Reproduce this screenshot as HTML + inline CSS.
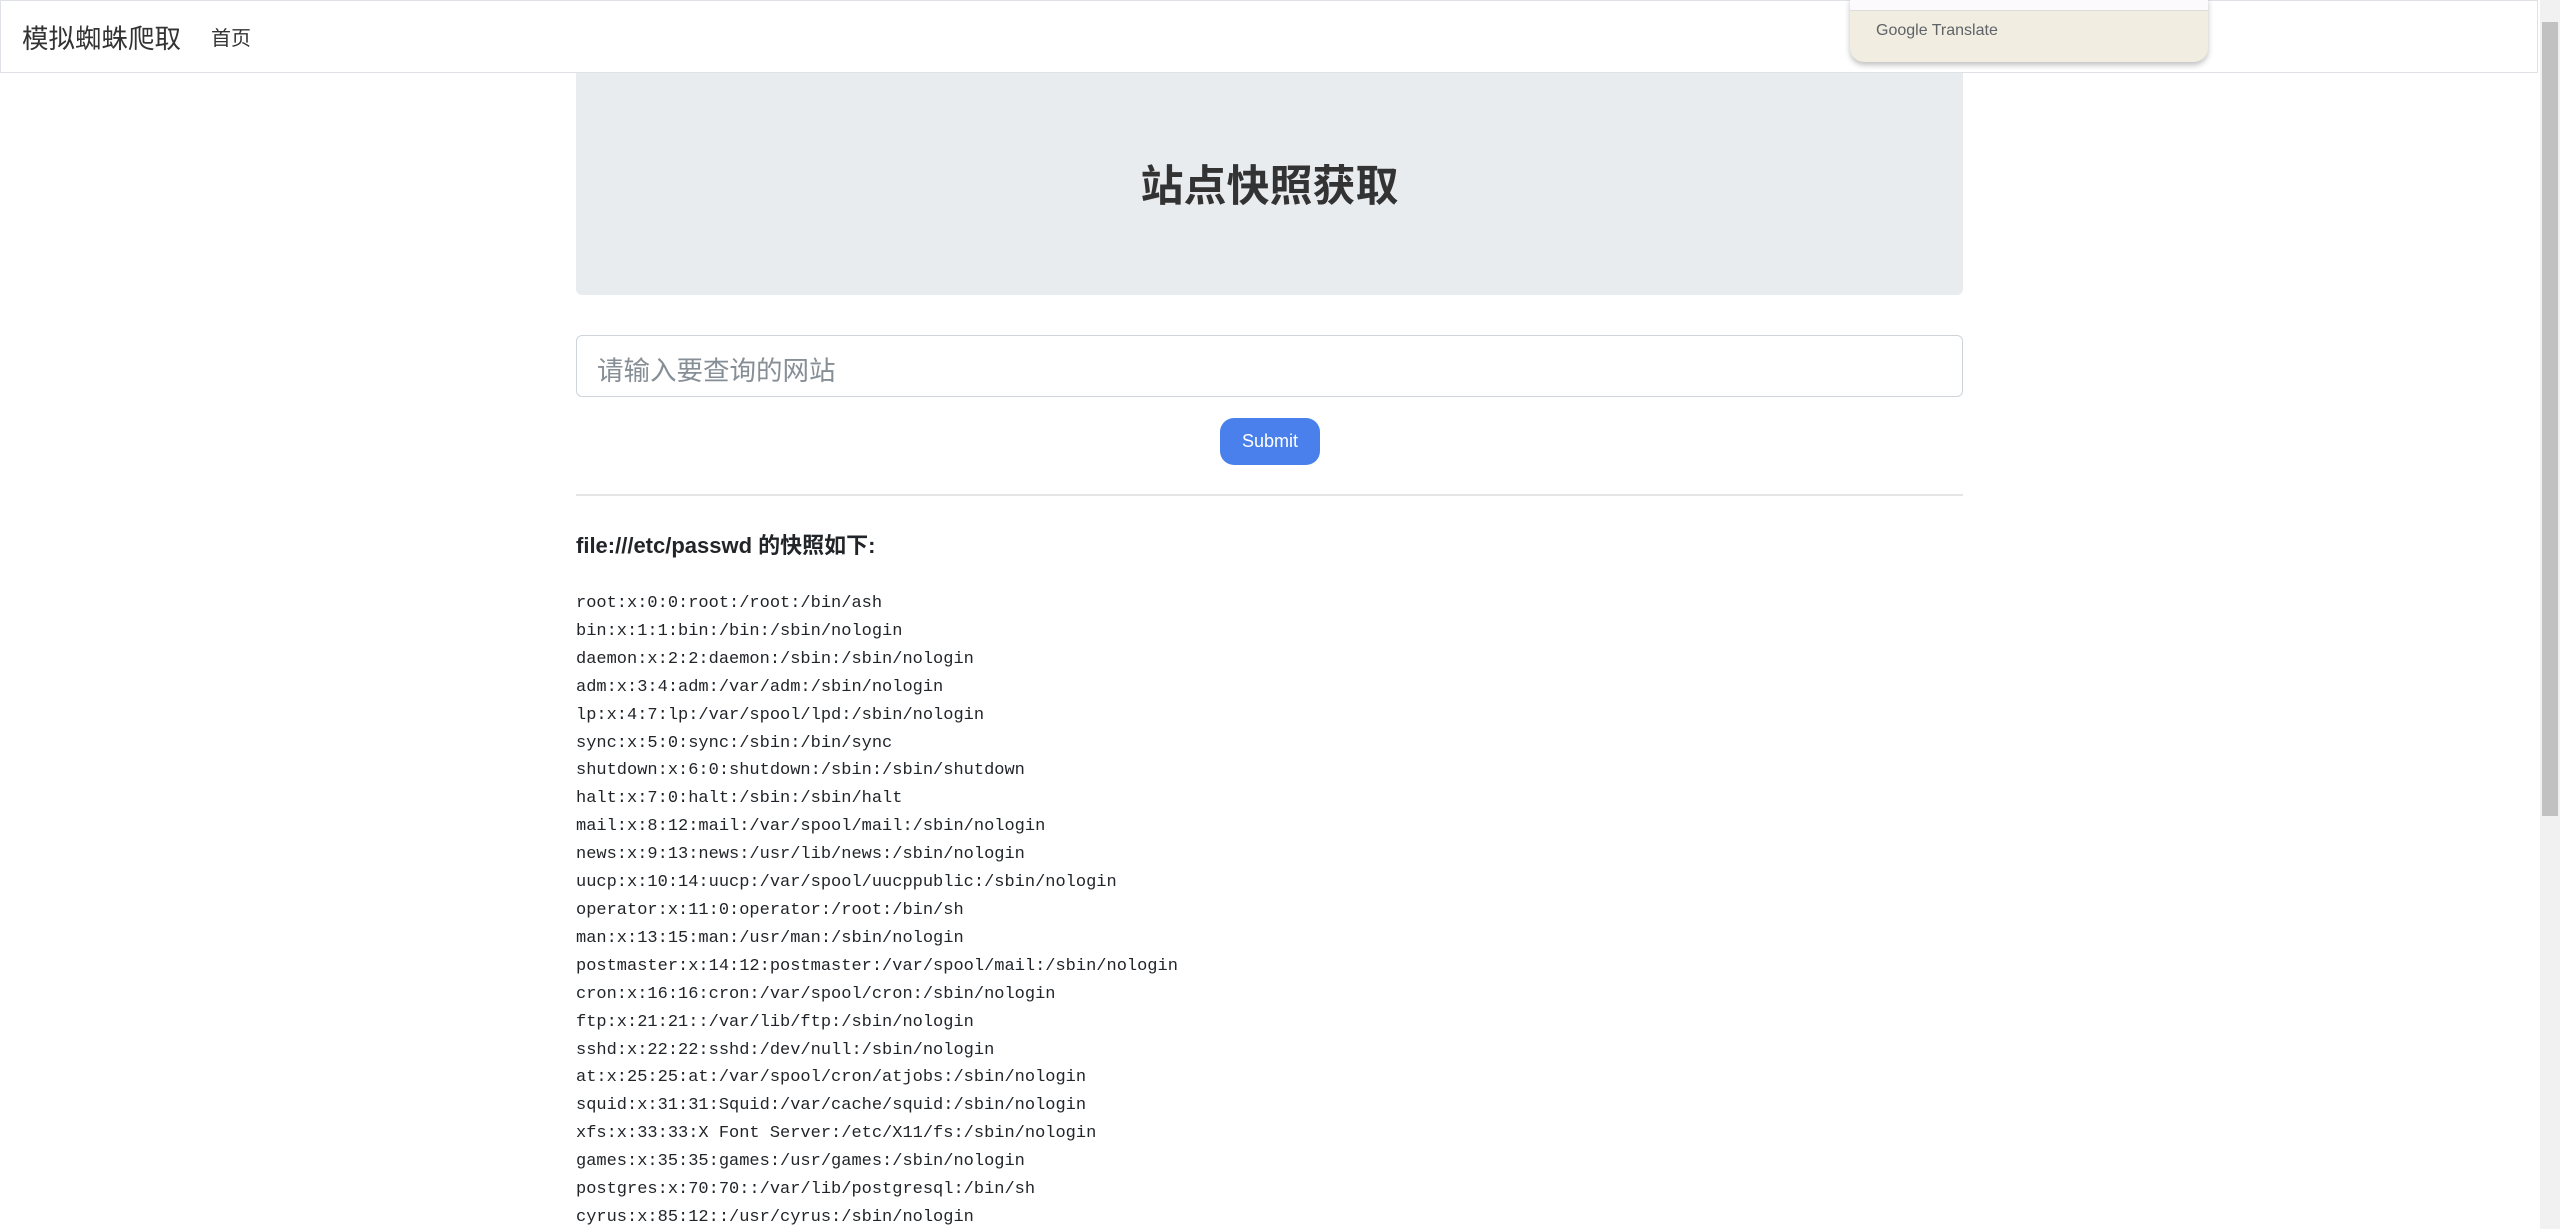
<!DOCTYPE html>
<html><head><meta charset="utf-8"><style>
html,body{margin:0;padding:0;background:#fff;width:2560px;height:1229px;overflow:hidden;font-family:"Liberation Sans","Noto Sans CJK SC",sans-serif;color:#212529}
.nav{position:absolute;left:0;top:0;width:2538px;height:73px;border:1px solid #dee2e6;background:#fff;box-sizing:border-box}
.brand{position:absolute;left:21px;top:16px;font-size:26.5px;color:#333}
.home{position:absolute;left:210px;top:21px;font-size:20px;color:#333}
.gt{position:absolute;left:1850px;top:-2px;width:358px;height:64px;background:#f1ede1;border-radius:0 0 14px 14px;box-shadow:0 3px 6px rgba(0,0,0,.25)}
.gt .w{height:12px;background:#fdfafd;border-bottom:1px solid #ddd}
.gt .t{position:absolute;left:26px;top:24px;font-size:16px;color:#5f6368}
.jumbo{position:absolute;left:576px;top:73px;width:1387px;height:222px;background:#e9ecef;border-radius:0 0 6px 6px}
.jumbo h1{margin:0;position:absolute;left:0;right:0;top:110px;transform:translateY(-50%);text-align:center;font-size:43px;font-weight:bold;color:#333}
.inp{position:absolute;left:576px;top:335px;width:1387px;height:62px;border:1px solid #ced4da;border-radius:6px;box-sizing:border-box}
.inp span{position:absolute;left:20px;top:13px;font-size:26.5px;color:#868e96}
.btn{position:absolute;left:1220px;top:418px;width:100px;height:47px;background:#4a80ec;border-radius:14px;color:#fff;font-size:18px;text-align:center;line-height:47px}
.hr{position:absolute;left:576px;top:494px;width:1387px;height:2px;background:#e5e5e5}
.h{position:absolute;left:576px;top:528px;font-size:22px;font-weight:bold;color:#212529}
pre{position:absolute;left:576px;top:590px;margin:0;font-family:"Liberation Mono",monospace;font-size:17px;line-height:27.9px;color:#212529}
.sb{position:absolute;left:2540px;top:0;width:20px;height:1229px;background:#f1f1f1}
.sb .th{position:absolute;left:2px;top:22px;width:16px;height:794px;background:#c1c1c1}
</style></head><body>
<div class="nav"><div class="brand">模拟蜘蛛爬取</div><div class="home">首页</div></div>
<div class="gt"><div class="w"></div><div class="t">Google Translate</div></div>
<div class="jumbo"><h1>站点快照获取</h1></div>
<div class="inp"><span>请输入要查询的网站</span></div>
<div class="btn">Submit</div>
<div class="hr"></div>
<div class="h">file:///etc/passwd 的快照如下:</div>
<pre>root:x:0:0:root:/root:/bin/ash
bin:x:1:1:bin:/bin:/sbin/nologin
daemon:x:2:2:daemon:/sbin:/sbin/nologin
adm:x:3:4:adm:/var/adm:/sbin/nologin
lp:x:4:7:lp:/var/spool/lpd:/sbin/nologin
sync:x:5:0:sync:/sbin:/bin/sync
shutdown:x:6:0:shutdown:/sbin:/sbin/shutdown
halt:x:7:0:halt:/sbin:/sbin/halt
mail:x:8:12:mail:/var/spool/mail:/sbin/nologin
news:x:9:13:news:/usr/lib/news:/sbin/nologin
uucp:x:10:14:uucp:/var/spool/uucppublic:/sbin/nologin
operator:x:11:0:operator:/root:/bin/sh
man:x:13:15:man:/usr/man:/sbin/nologin
postmaster:x:14:12:postmaster:/var/spool/mail:/sbin/nologin
cron:x:16:16:cron:/var/spool/cron:/sbin/nologin
ftp:x:21:21::/var/lib/ftp:/sbin/nologin
sshd:x:22:22:sshd:/dev/null:/sbin/nologin
at:x:25:25:at:/var/spool/cron/atjobs:/sbin/nologin
squid:x:31:31:Squid:/var/cache/squid:/sbin/nologin
xfs:x:33:33:X Font Server:/etc/X11/fs:/sbin/nologin
games:x:35:35:games:/usr/games:/sbin/nologin
postgres:x:70:70::/var/lib/postgresql:/bin/sh
cyrus:x:85:12::/usr/cyrus:/sbin/nologin</pre>
<div class="sb"><div class="th"></div></div>
</body></html>
